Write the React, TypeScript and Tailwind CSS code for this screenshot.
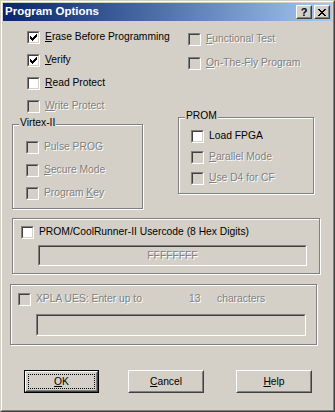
import React from "react";

const font = { fontFamily: '"Liberation Sans", Arial, sans-serif' };

function CheckMark() {
  // 7x7 pixel check, classic Windows style
  const rows = ["......#", ".....##", "#...###", "##.###.", "#####..", ".###...", "..#...."];
  return (
    <svg width="7" height="7" viewBox="0 0 7 7" shapeRendering="crispEdges" className="m-[1px]">
      {rows.map((r, y) =>
        r.split("").map((c, x) => (c === "#" ? <rect key={`${x}-${y}`} x={x} y={y} width="1" height="1" fill="#000" /> : null))
      )}
    </svg>
  );
}

function Box({ checked = false, disabled = false }: { checked?: boolean; disabled?: boolean }) {
  return (
    <span className="flex h-[13px] w-[13px] shrink-0 border border-t-[#808080] border-l-[#808080] border-b-white border-r-white">
      <span
        className={`flex h-full w-full border border-t-[#404040] border-l-[#404040] border-b-[#d4d0c8] border-r-[#d4d0c8] ${
          disabled ? "bg-[#d4d0c8]" : "bg-white"
        }`}
      >
        {checked && <CheckMark />}
      </span>
    </span>
  );
}

function Label({ text, u, disabled }: { text: string; u?: number; disabled?: boolean }) {
  const cls = disabled ? "text-[#808080] [text-shadow:1px_1px_0_#fff]" : "text-black";
  if (u === undefined) return <span className={`whitespace-nowrap ${cls}`}>{text}</span>;
  return (
    <span className={`whitespace-nowrap ${cls}`}>
      {text.slice(0, u)}
      <span className="underline underline-offset-[1px]">{text[u]}</span>
      {text.slice(u + 1)}
    </span>
  );
}

function Check({
  text,
  u,
  checked,
  disabled,
}: {
  text: string;
  u?: number;
  checked?: boolean;
  disabled?: boolean;
}) {
  return (
    <div className="flex h-[13px] items-center gap-[5px] leading-none">
      <Box checked={checked} disabled={disabled} />
      <Label text={text} u={u} disabled={disabled} />
    </div>
  );
}

function Group({ label, className, children }: { label?: string; className: string; children: React.ReactNode }) {
  return (
    <div className={`relative shrink-0 border border-[#808080] shadow-[inset_1px_1px_0_#fff,1px_1px_0_#fff] ${className}`}>
      {label && (
        <span className="absolute -top-[7px] left-[6px] bg-[#d4d0c8] px-[1px] leading-none text-black">{label}</span>
      )}
      {children}
    </div>
  );
}

function Field({ className, children }: { className: string; children?: React.ReactNode }) {
  return (
    <div className={`border border-t-[#808080] border-l-[#808080] border-b-white border-r-white ${className}`}>
      <div className="flex h-full w-full items-center justify-center border border-t-[#404040] border-l-[#404040] border-b-[#d4d0c8] border-r-[#d4d0c8] bg-[#d4d0c8]">
        {children}
      </div>
    </div>
  );
}

function Button({ text, u, isDefault, className }: { text: string; u: number; isDefault?: boolean; className: string }) {
  return (
    <div className={`h-[23px] shrink-0 ${isDefault ? "border border-black" : ""} ${className}`}>
      <div className="relative flex h-full w-full items-center justify-center border border-t-white border-l-white border-b-[#404040] border-r-[#404040]">
        <div className="absolute inset-0 border border-t-transparent border-l-transparent border-b-[#808080] border-r-[#808080]" />
        {isDefault && <div className="absolute inset-[2px] border border-dotted border-black" />}
        <Label text={text} u={u} />
      </div>
    </div>
  );
}

function XGlyph() {
  const rows = ["##....##", ".##..##.", "..####..", "...##...", "..####..", ".##..##.", "##....##"];
  return (
    <svg width="8" height="7" viewBox="0 0 8 7" shapeRendering="crispEdges">
      {rows.map((r, y) =>
        r.split("").map((c, x) => (c === "#" ? <rect key={`${x}-${y}`} x={x} y={y} width="1" height="1" fill="#000" /> : null))
      )}
    </svg>
  );
}

function CaptionButton({ children, className }: { children: React.ReactNode; className?: string }) {
  return (
    <div className={`h-[14px] w-[16px] border border-t-white border-l-white border-b-[#404040] border-r-[#404040] bg-[#d4d0c8] ${className ?? ""}`}>
      <div className="flex h-full w-full items-center justify-center border border-t-transparent border-l-transparent border-b-[#808080] border-r-[#808080] text-[11px] font-bold leading-none text-black">
        {children}
      </div>
    </div>
  );
}

export default function App() {
  return (
    <div style={font} className="h-[412px] w-[335px] bg-[#d4d0c8] text-[10.3px]">
      <div className="h-full w-full border border-t-[#d4d0c8] border-l-[#d4d0c8] border-b-[#404040] border-r-[#404040]">
        <div className="flex h-full w-full flex-col border border-t-white border-l-white border-b-[#808080] border-r-[#808080] p-[1px]">
          {/* title bar */}
          <div className="flex h-[18px] shrink-0 items-center bg-gradient-to-r from-[#0a246a] to-[#a6caf0] pl-[2px] pr-[2px]">
            <span className="text-[11.5px] font-bold leading-none text-white">Program Options</span>
            <div className="ml-auto flex items-center">
              <CaptionButton>?</CaptionButton>
              <CaptionButton className="ml-[2px]">
                <XGlyph />
              </CaptionButton>
            </div>
          </div>

          {/* options */}
          <div className="flex h-[96px] shrink-0 pt-[10px]">
            <div className="ml-[24px] flex w-[161px] flex-col gap-[10px]">
              <Check text="Erase Before Programming" u={0} checked />
              <Check text="Verify" u={0} checked />
              <Check text="Read Protect" u={0} />
              <Check text="Write Protect" u={0} disabled />
            </div>
            <div className="mt-[2px] flex flex-col gap-[11px]">
              <Check text="Functional Test" u={0} disabled />
              <Check text="On-The-Fly Program" u={0} disabled />
            </div>
          </div>

          <div className="flex items-start">
            <Group label="Virtex-II" className="ml-[9px] mt-[7px] h-[85px] w-[131px]">
              <div className="flex flex-col gap-[10px] pl-[13px] pt-[16px]">
                <Check text="Pulse PROG" disabled />
                <Check text="Secure Mode" u={0} disabled />
                <Check text="Program Key" u={8} disabled />
              </div>
            </Group>
            <Group label="PROM" className="ml-[35px] h-[77px] w-[136px]">
              <div className="flex flex-col gap-[8px] pl-[12px] pt-[12px]">
                <Check text="Load FPGA" />
                <Check text="Parallel Mode" u={0} disabled />
                <Check text="Use D4 for CF" u={0} disabled />
              </div>
            </Group>
          </div>

          <Group className="ml-[9px] mt-[9px] h-[56px] w-[308px]">
            <div className="flex flex-col pl-[8px] pt-[7px]">
              <Check text="PROM/CoolRunner-II Usercode (8 Hex Digits)" />
              <Field className="ml-[17px] mt-[6px] h-[21px] w-[269px]">
                <Label text="FFFFFFFF" disabled />
              </Field>
            </div>
          </Group>

          <Group className="ml-[7px] mt-[10px] h-[61px] w-[307px]">
            <div className="flex flex-col pl-[7px] pt-[8px]">
              <div className="flex h-[13px] items-center gap-[5px] leading-none">
                <Box disabled />
                <span className="w-[153px]">
                  <Label text="XPLA UES: Enter up to" disabled />
                </span>
                <span className="-ml-[5px] w-[23px]">
                  <Label text="13" disabled />
                </span>
                <Label text="characters" disabled />
              </div>
              <Field className="ml-[18px] mt-[8px] h-[22px] w-[270px]" />
            </div>
          </Group>

          <div className="mt-[25px] flex">
            <Button text="OK" u={0} isDefault className="ml-[21px] w-[75px]" />
            <Button text="Cancel" u={0} className="ml-[29px] w-[76px]" />
            <Button text="Help" u={0} className="ml-[32px] w-[76px]" />
          </div>
        </div>
      </div>
    </div>
  );
}
